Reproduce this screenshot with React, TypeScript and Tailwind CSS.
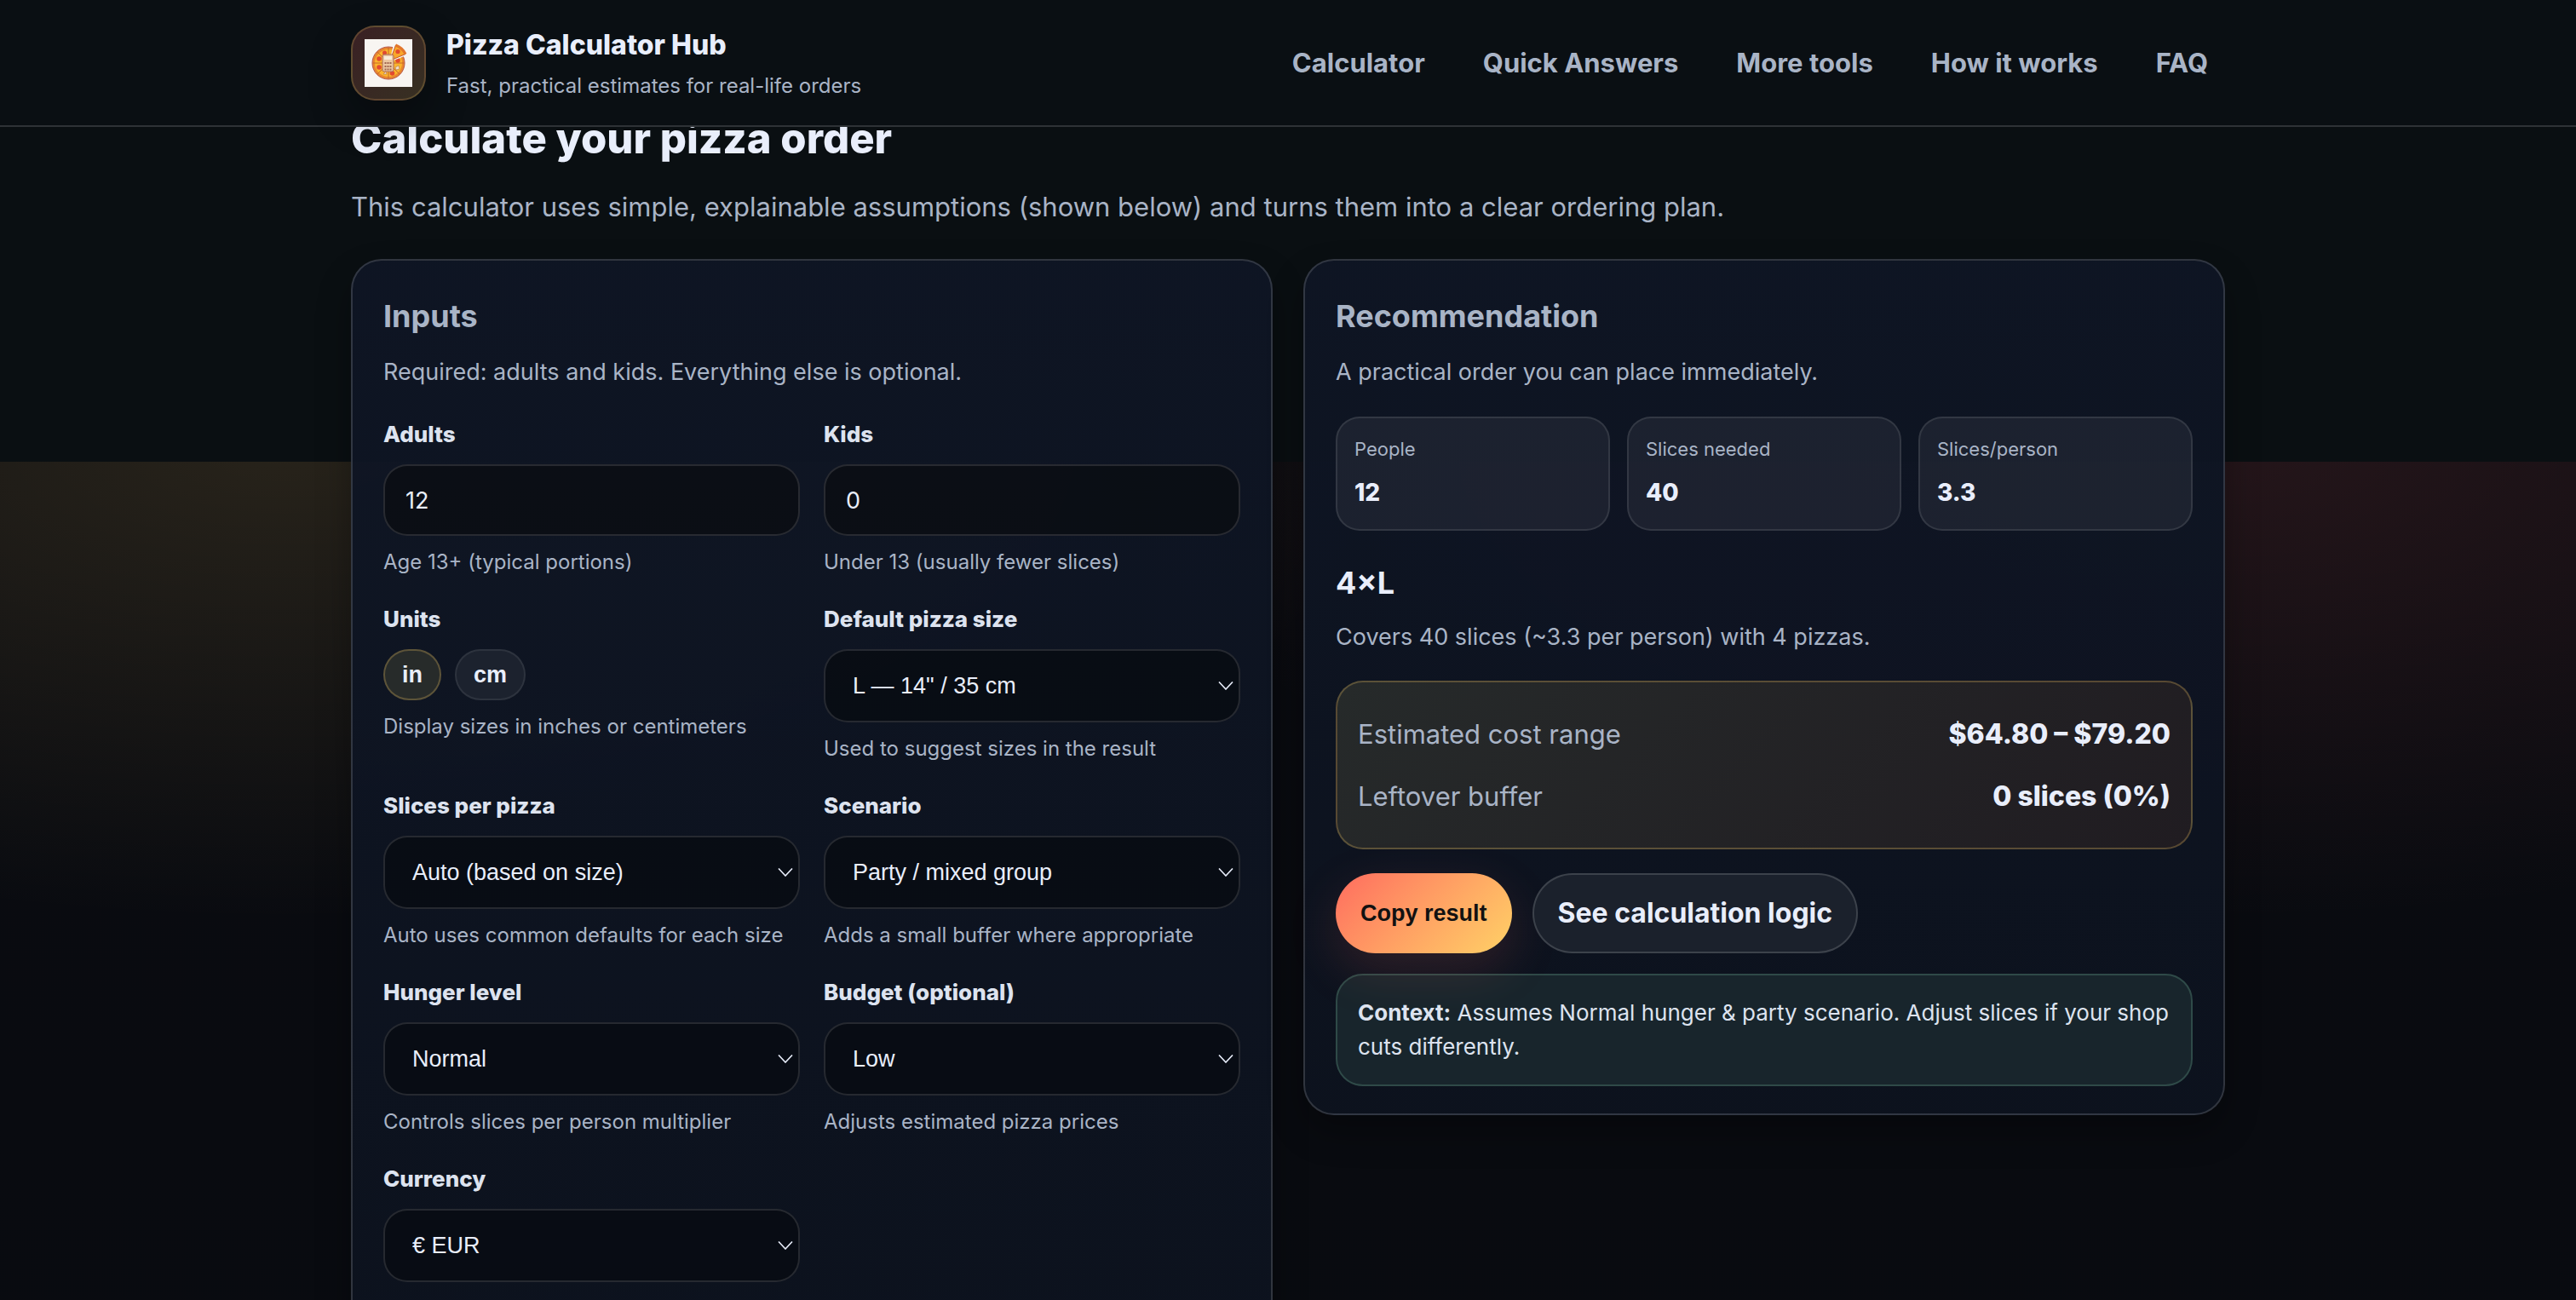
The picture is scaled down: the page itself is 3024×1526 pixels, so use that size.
import type { ReactNode } from "react";

interface FieldProps {
  id: string;
  label: string;
  help?: string;
  children: ReactNode;
}

interface SelectProps {
  id: string;
  options: string[];
}

const navLinks = [
  { label: "Calculator", href: "#calculator" },
  { label: "Quick Answers", href: "#answers" },
  { label: "More tools", href: "#tools" },
  { label: "How it works", href: "#how" },
  { label: "FAQ", href: "#faq" },
];

const stats = [
  { label: "People", value: "12" },
  { label: "Slices needed", value: "40" },
  { label: "Slices/person", value: "3.3" },
];

const Field = ({ id, label, help, children }: FieldProps) => (
  <div>
    <label
      htmlFor={id}
      className="block text-[26px] leading-[42px] font-extrabold text-[#dde3ef]"
    >
      {label}
    </label>
    <div className="mt-3.5">{children}</div>
    {help && <p className="mt-3 text-2xl leading-[37px]">{help}</p>}
  </div>
);

const NumberInput = ({ id, value }: { id: string; value: number }) => (
  <input
    id={id}
    type="text"
    inputMode="numeric"
    defaultValue={value}
    className="block h-[84px] w-full rounded-[28px] border-2 border-white/12 bg-[#0a0c12]/80 px-6 text-[27px] text-[#e9eefb]"
  />
);

const Select = ({ id, options }: SelectProps) => (
  <div className="grid items-center">
    <select
      id={id}
      className="col-start-1 row-start-1 h-[86px] w-full appearance-none rounded-[28px] border-2 border-white/12 bg-[#080b12]/80 px-8 font-['Liberation_Sans',sans-serif] text-[27px] text-[#e9eefb]"
    >
      {options.map((option) => (
        <option key={option}>{option}</option>
      ))}
    </select>
    <svg
      viewBox="0 0 18 10"
      className="pointer-events-none col-start-1 row-start-1 mr-2 h-2.5 w-[18px] justify-self-end"
      fill="none"
      stroke="#e9eefb"
      strokeWidth="1.6"
    >
      <path d="M1 0.5l8 8.5 8-8.5" />
    </svg>
  </div>
);

const PizzaLogo = () => (
  <svg viewBox="0 0 56 56" className="size-14">
    <rect width="56" height="56" fill="#f8f5f2" />
    <circle cx="28" cy="28" r="19" fill="#e8862e" stroke="#b4544a" />
    <circle cx="28" cy="28" r="16" fill="#fbb52c" />
    <path
      d="M28 10v36M10 28h36M15 15l26 26M15 41l26-26"
      stroke="#c8672a"
      strokeWidth="1"
    />
    <g fill="#e2492f">
      <circle cx="17" cy="23" r="2.8" />
      <circle cx="17" cy="33" r="2.8" />
      <circle cx="23.5" cy="16" r="2.5" />
      <circle cx="39" cy="25" r="2.8" />
      <circle cx="32.5" cy="40" r="2.8" />
    </g>
    <path
      d="M22 41l3-3 1 3zM36 33l4-2 1 4-4 1z"
      fill="#f3dfc9"
      stroke="#b4744a"
      strokeWidth="0.6"
    />
    {/* lifted slice with the gap it leaves */}
    <path d="M29 27L34 6l15 13z" fill="#f8f5f2" />
    <path d="M30 25L36.5 7q8 3 11.5 10.5z" fill="#f9a72b" stroke="#c2552c" />
    <path
      d="M36.5 7q8 3 11.5 10.5"
      fill="none"
      stroke="#e2762c"
      strokeWidth="3"
    />
    <circle cx="39" cy="14.5" r="2.6" fill="#e2492f" />
    <rect
      x="21"
      y="18"
      width="13"
      height="20"
      rx="2"
      fill="#ecc7a2"
      stroke="#a9695a"
    />
    <rect x="23" y="20" width="9" height="4" fill="#f8ecd8" />
    <path
      d="M23.5 28h2M26.5 28h2M29.5 28h2M23.5 32h2M26.5 32h2M29.5 32h2M23.5 35.5h2M26.5 35.5h2M29.5 35.5h2"
      stroke="#a06650"
      strokeWidth="2"
    />
  </svg>
);

const Header = () => (
  <header className="relative z-10 border-b-2 border-white/15 bg-[#0a0f13]">
    <div className="mx-auto flex h-[147px] max-w-[2200px] items-center justify-between">
      <div className="flex items-center gap-6">
        <div className="flex size-[88px] items-center justify-center rounded-[28px] border-2 border-[#ffd166]/20 bg-linear-135 from-[#3a2024] to-[#373022] shadow-[0_20px_50px_rgba(0,0,0,0.3)]">
          <PizzaLogo />
        </div>
        <div className="pt-1">
          <p className="text-[32px] leading-[50px] font-extrabold text-[#e9eefb]">
            Pizza Calculator Hub
          </p>
          <p className="text-2xl leading-[46px]">
            Fast, practical estimates for real-life orders
          </p>
        </div>
      </div>
      <nav className="flex gap-7">
        {navLinks.map((link) => (
          <a
            key={link.href}
            href={link.href}
            className="px-5 text-[31px] leading-[52px] font-bold"
          >
            {link.label}
          </a>
        ))}
      </nav>
    </div>
  </header>
);

const InputsCard = () => (
  <section className="rounded-[36px] border-2 border-white/15 bg-linear-to-b from-[#0f1625]/95 to-[#0d131f]/95 px-9 pt-9 pb-20 shadow-[0_20px_40px_rgba(0,0,0,0.3)]">
    <h3 className="text-4xl leading-[58px] font-bold">Inputs</h3>
    <p className="mt-3.5 text-[27px] leading-[46px]">
      Required: adults and kids. Everything else is optional.
    </p>
    <div className="mt-[29px] grid grid-cols-2 gap-7">
      <Field id="adults" label="Adults" help="Age 13+ (typical portions)">
        <NumberInput id="adults" value={12} />
      </Field>
      <Field id="kids" label="Kids" help="Under 13 (usually fewer slices)">
        <NumberInput id="kids" value={0} />
      </Field>
      <Field
        id="unit-in"
        label="Units"
        help="Display sizes in inches or centimeters"
      >
        <div className="flex gap-4 font-['Liberation_Sans',sans-serif] text-[27px] font-bold text-[#e9eefb]">
          <button
            id="unit-in"
            type="button"
            className="h-[60px] rounded-full border-2 border-[#ffd166]/25 bg-[#272b2a] px-5"
          >
            in
          </button>
          <button
            type="button"
            className="h-[60px] rounded-full border-2 border-white/8 bg-[#1c222e] px-5"
          >
            cm
          </button>
        </div>
      </Field>
      <Field
        id="size"
        label="Default pizza size"
        help="Used to suggest sizes in the result"
      >
        <Select id="size" options={['L — 14" / 35 cm', 'M — 12" / 30 cm']} />
      </Field>
      <Field
        id="slices"
        label="Slices per pizza"
        help="Auto uses common defaults for each size"
      >
        <Select id="slices" options={["Auto (based on size)", "8", "10"]} />
      </Field>
      <Field
        id="scenario"
        label="Scenario"
        help="Adds a small buffer where appropriate"
      >
        <Select id="scenario" options={["Party / mixed group", "Office"]} />
      </Field>
      <Field
        id="hunger"
        label="Hunger level"
        help="Controls slices per person multiplier"
      >
        <Select id="hunger" options={["Normal", "Light", "Hungry"]} />
      </Field>
      <Field
        id="budget"
        label="Budget (optional)"
        help="Adjusts estimated pizza prices"
      >
        <Select id="budget" options={["Low", "Medium", "High"]} />
      </Field>
      <Field id="currency" label="Currency">
        <Select id="currency" options={["€ EUR", "$ USD"]} />
      </Field>
    </div>
  </section>
);

const RecommendationCard = () => (
  <section className="rounded-[36px] border-2 border-white/15 bg-linear-to-b from-[#0f1625]/95 to-[#0d131f]/95 px-9 pt-9 pb-8 shadow-[0_20px_40px_rgba(0,0,0,0.3)]">
    <h3 className="text-4xl leading-[58px] font-bold">Recommendation</h3>
    <p className="mt-3.5 text-[27px] leading-[46px]">
      A practical order you can place immediately.
    </p>

    <dl className="mt-[29px] grid grid-cols-3 gap-5">
      {stats.map((stat) => (
        <div
          key={stat.label}
          className="rounded-[28px] border-2 border-white/10 bg-white/6 px-5 pt-[18px] pb-5"
        >
          <dt className="text-[22px] leading-9">{stat.label}</dt>
          <dd className="mt-2.5 text-[28px] leading-[46px] font-extrabold text-[#e9eefb]">
            {stat.value}
          </dd>
        </div>
      ))}
    </dl>

    <p className="mt-8 text-4xl leading-[58px] font-bold text-[#e9eefb]">4×L</p>
    <p className="mt-3 text-[27px] leading-[46px]">
      Covers 40 slices (~3.3 per person) with 4 pizzas.
    </p>

    <dl className="mt-7 rounded-[32px] border-2 border-[#ffd166]/25 bg-linear-135 from-[#262a2a] to-[#201c21] px-6 py-6 text-[31px] leading-[73px]">
      <div className="flex justify-between">
        <dt>Estimated cost range</dt>
        <dd className="text-[32px] font-extrabold text-[#e9eefb]">
          $64.80 – $79.20
        </dd>
      </div>
      <div className="flex justify-between">
        <dt>Leftover buffer</dt>
        <dd className="text-[32px] font-extrabold text-[#e9eefb]">
          0 slices (0%)
        </dd>
      </div>
    </dl>

    <div className="mt-7 flex gap-6">
      <button
        type="button"
        className="h-[94px] rounded-full bg-linear-135 from-[#ff6b5f] to-[#ffd166] px-[29px] font-['Liberation_Sans',sans-serif] text-[27px] font-bold text-[#111111] shadow-[0_20px_60px_rgba(255,107,95,0.15)]"
      >
        Copy result
      </button>
      <a
        href="#how"
        className="flex h-[94px] items-center rounded-full border-2 border-white/15 bg-[#1b212c] px-7 text-[32px] font-bold text-[#e9eefb]"
      >
        See calculation logic
      </a>
    </div>

    <p className="mt-6 rounded-[32px] border-2 border-[#2f4a48] bg-[#18252c] p-6 text-[26px] leading-10 text-[#dde3ef]">
      <strong>Context:</strong> Assumes Normal hunger &amp; party scenario.
      Adjust slices if your shop cuts differently.
    </p>
  </section>
);

export default function App() {
  return (
    <div className="h-screen overflow-hidden bg-[#0a0f12] bg-[image:radial-gradient(1300px_560px_at_11%_-20px,rgba(255,209,102,0.12),transparent),radial-gradient(1300px_560px_at_86%_-20px,rgba(255,107,107,0.11),transparent),linear-gradient(#0a0b10,#080b10)] bg-[position:0_542px] bg-no-repeat font-['Inter',sans-serif] text-[#a9b4c6]">
      <Header />
      <main className="mx-auto max-w-[2200px]">
        <h2 className="-mt-6 text-[49px] leading-[76px] font-extrabold text-[#e9eefb]">
          Calculate your pizza order
        </h2>
        <p className="mt-4 text-[31px] leading-[52px]">
          This calculator uses simple, explainable assumptions (shown below) and
          turns them into a clear ordering plan.
        </p>
        <div className="mt-[35px] grid grid-cols-2 items-start gap-9">
          <InputsCard />
          <RecommendationCard />
        </div>
      </main>
    </div>
  );
}
